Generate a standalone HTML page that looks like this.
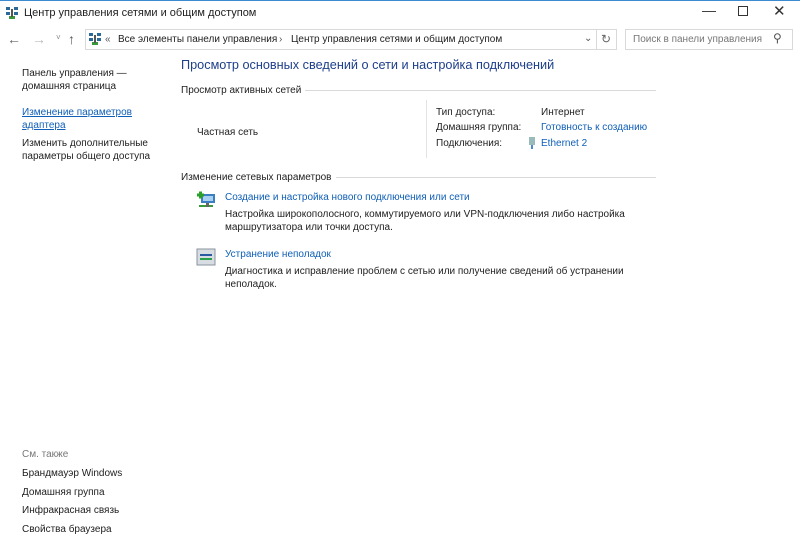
<!DOCTYPE html>
<html><head><meta charset="utf-8"><style>
*{margin:0;padding:0;box-sizing:border-box}
body{width:800px;height:545px;background:#fff;font-family:"Liberation Sans",sans-serif;font-size:10px;color:#1e1e1e;position:relative;overflow:hidden}
.a{position:absolute;white-space:nowrap}
.l{color:#0f5fb7}
.top{position:absolute;left:0;top:0;width:800px;height:1px;background:#3c8ad0}
.sep{position:absolute;height:1px;background:#d9d9d9}
.ic{position:absolute}
</style></head><body>
<div class="top"></div>
<svg class="ic" style="left:5px;top:6px" width="14" height="14"><rect x="1" y="1" width="4" height="3" fill="#2a6a9a"/><rect x="9" y="1" width="4" height="3" fill="#2a6a9a"/><rect x="1" y="6" width="4" height="3" fill="#2a6a9a"/><rect x="9" y="6" width="4" height="3" fill="#2a6a9a"/><rect x="4" y="10" width="6" height="3" fill="#3a9a3a"/><rect x="6" y="3" width="2" height="8" fill="#555"/></svg>
<div class="a" style="left:24px;top:7px;font-size:11px">Центр управления сетями и общим доступом</div>
<div class="a" style="left:702px;top:2px;font-size:14px;color:#333">&#8212;</div>
<div class="a" style="left:738px;top:6px;width:10px;height:10px;border:1px solid #333"></div>
<div class="a" style="left:773px;top:2px;font-size:15px;color:#333">✕</div>
<div class="a" style="left:7px;top:31px;font-size:14px;color:#666">←</div>
<div class="a" style="left:32px;top:31px;font-size:14px;color:#bbb">→</div>
<div class="a" style="left:56px;top:33px;font-size:8px;color:#888">˅</div>
<div class="a" style="left:68px;top:31px;font-size:14px;color:#555">↑</div>
<div class="a" style="left:85px;top:29px;width:532px;height:21px;border:1px solid #d9d9d9"></div>
<svg class="ic" style="left:88px;top:32px" width="14" height="14"><rect x="1" y="1" width="4" height="3" fill="#2a6a9a"/><rect x="9" y="1" width="4" height="3" fill="#2a6a9a"/><rect x="1" y="6" width="4" height="3" fill="#2a6a9a"/><rect x="9" y="6" width="4" height="3" fill="#2a6a9a"/><rect x="4" y="10" width="6" height="3" fill="#3a9a3a"/><rect x="6" y="3" width="2" height="8" fill="#555"/></svg>
<div class="a" style="left:105px;top:34px;color:#555">«</div>
<div class="a" style="left:118px;top:34px">Все элементы панели управления</div>
<div class="a" style="left:279px;top:34px;color:#555">›</div>
<div class="a" style="left:291px;top:34px">Центр управления сетями и общим доступом</div>
<div class="a" style="left:584px;top:33px;color:#555">⌄</div>
<div class="a" style="left:596px;top:30px;width:1px;height:19px;background:#d9d9d9"></div>
<div class="a" style="left:601px;top:32px;color:#666;font-size:12px">↻</div>
<div class="a" style="left:625px;top:29px;width:168px;height:21px;border:1px solid #d9d9d9"></div>
<div class="a" style="left:633px;top:34px;color:#777">Поиск в панели управления</div>
<div class="a" style="left:773px;top:31px;color:#555;font-size:12px">⚲</div>

<div class="a" style="left:22px;top:67px;line-height:13px">Панель управления —<br>домашняя страница</div>
<div class="a l" style="left:22px;top:106px;line-height:13px;text-decoration:underline">Изменение параметров<br>адаптера</div>
<div class="a" style="left:22px;top:137px;line-height:13px">Изменить дополнительные<br>параметры общего доступа</div>

<div class="a" style="left:181px;top:58px;font-size:12.7px;color:#1e3f8a">Просмотр основных сведений о сети и настройка подключений</div>
<div class="a" style="left:181px;top:85px">Просмотр активных сетей</div>
<div class="sep" style="left:305px;top:90px;width:351px"></div>
<div class="a" style="left:197px;top:127px">Частная сеть</div>
<div class="a" style="left:426px;top:100px;width:1px;height:58px;background:#e3e3e3"></div>
<div class="a" style="left:436px;top:107px">Тип доступа:</div>
<div class="a" style="left:541px;top:107px">Интернет</div>
<div class="a" style="left:436px;top:122px">Домашняя группа:</div>
<div class="a l" style="left:541px;top:122px">Готовность к созданию</div>
<div class="a" style="left:436px;top:138px">Подключения:</div>
<svg class="ic" style="left:528px;top:137px" width="8" height="12"><rect x="1" y="0" width="6" height="8" fill="#9bb" /><rect x="3" y="8" width="2" height="4" fill="#4a8ad0"/></svg>
<div class="a l" style="left:541px;top:138px">Ethernet 2</div>
<div class="sep" style="left:181px;top:177px;width:475px"></div>
<div class="a" style="left:181px;top:172px;background:#fff;padding-right:4px">Изменение сетевых параметров</div>

<svg class="ic" style="left:196px;top:190px" width="22" height="20"><rect x="5" y="4" width="14" height="9" fill="#3b7fc0"/><rect x="7" y="6" width="10" height="5" fill="#a8d0f0"/><path d="M1 5h7M4.5 1.5v7" stroke="#2aa02a" stroke-width="3"/><path d="M3 16h14" stroke="#3a9a3a" stroke-width="2"/><rect x="10" y="13" width="3" height="4" fill="#666"/></svg>
<div class="a l" style="left:225px;top:192px">Создание и настройка нового подключения или сети</div>
<div class="a" style="left:225px;top:208px;line-height:13px">Настройка широкополосного, коммутируемого или VPN-подключения либо настройка<br>маршрутизатора или точки доступа.</div>
<svg class="ic" style="left:196px;top:248px" width="20" height="18"><rect x="1" y="1" width="18" height="16" fill="#d8dde3" stroke="#8a939c"/><path d="M4 7h12" stroke="#2a5aa0" stroke-width="2"/><path d="M4 11h12" stroke="#2aa04a" stroke-width="2"/></svg>
<div class="a l" style="left:225px;top:249px">Устранение неполадок</div>
<div class="a" style="left:225px;top:265px;line-height:13px">Диагностика и исправление проблем с сетью или получение сведений об устранении<br>неполадок.</div>

<div class="a" style="left:22px;top:449px;color:#777">См. также</div>
<div class="a" style="left:22px;top:468px">Брандмауэр Windows</div>
<div class="a" style="left:22px;top:487px">Домашняя группа</div>
<div class="a" style="left:22px;top:505px">Инфракрасная связь</div>
<div class="a" style="left:22px;top:524px">Свойства браузера</div>
</body></html>
